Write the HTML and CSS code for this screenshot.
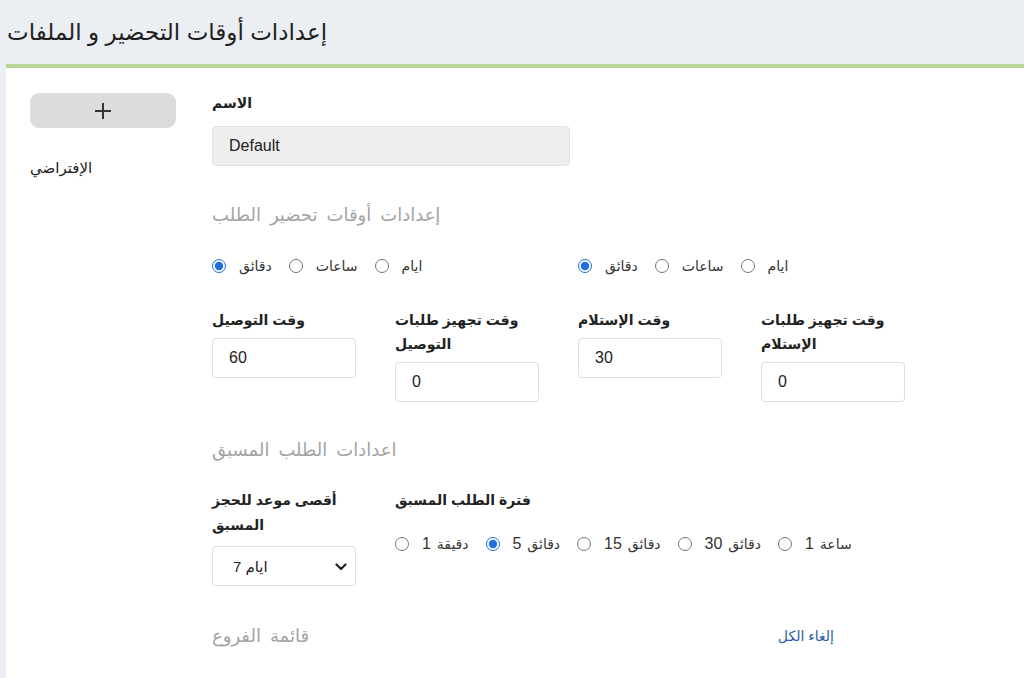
FILE: index.html
```html
<!DOCTYPE html>
<html lang="ar">
<head>
<meta charset="utf-8">
<link rel="stylesheet" href="styles.css">
</head>
<body>
<header class="page-head">
  <h1 class="page-title">إعدادات أوقات التحضير و الملفات</h1>
</header>
<div class="card">
  <aside class="side">
    <button class="add-btn" type="button" aria-label="add">
      <svg width="20" height="20" viewBox="0 0 20 20"><path d="M10 2v16M2 10h16" stroke="#333" stroke-width="2" fill="none"/></svg>
    </button>
    <div class="side-item">الإفتراضي</div>
  </aside>
  <main class="main">
    <label class="lbl">الاسم</label>
    <input class="field name-field" type="text" value="Default">

    <h2 class="sec-title">إعدادات أوقات تحضير الطلب</h2>

    <div class="grid4">
      <div class="radios span2">
        <label class="radio"><input type="radio" name="u1" checked><span>دقائق</span></label>
        <label class="radio"><input type="radio" name="u1"><span>ساعات</span></label>
        <label class="radio"><input type="radio" name="u1"><span>ايام</span></label>
      </div>
      <div class="radios span2">
        <label class="radio"><input type="radio" name="u2" checked><span>دقائق</span></label>
        <label class="radio"><input type="radio" name="u2"><span>ساعات</span></label>
        <label class="radio"><input type="radio" name="u2"><span>ايام</span></label>
      </div>

      <div class="col">
        <label class="lbl2">وقت التوصيل</label>
        <input class="field" type="text" value="60">
      </div>
      <div class="col">
        <label class="lbl2">وقت تجهيز طلبات<br>التوصيل</label>
        <input class="field" type="text" value="0">
      </div>
      <div class="col">
        <label class="lbl2">وقت الإستلام</label>
        <input class="field" type="text" value="30">
      </div>
      <div class="col">
        <label class="lbl2">وقت تجهيز طلبات<br>الإستلام</label>
        <input class="field" type="text" value="0">
      </div>
    </div>

    <h2 class="sec-title sec2">اعدادات الطلب المسبق</h2>

    <div class="pre">
      <div class="col">
        <label class="lbl2">أقصى موعد للحجز<br>المسبق</label>
        <div class="select-wrap">
          <select class="field sel">
            <option>7 ايام</option>
          </select>
          <svg class="chev" width="12" height="8" viewBox="0 0 12 8"><path d="M1.5 1.5L6 6l4.5-4.5" stroke="#222" stroke-width="2.2" fill="none" stroke-linecap="round" stroke-linejoin="round"/></svg>
        </div>
      </div>
      <div class="col">
        <label class="lbl2">فترة الطلب المسبق</label>
        <div class="radios pre-radios">
          <label class="radio"><input type="radio" name="p"><span>دقيقة <b class="num">1</b></span></label>
          <label class="radio"><input type="radio" name="p" checked><span>دقائق <b class="num">5</b></span></label>
          <label class="radio"><input type="radio" name="p"><span>دقائق <b class="num">15</b></span></label>
          <label class="radio"><input type="radio" name="p"><span>دقائق <b class="num">30</b></span></label>
          <label class="radio"><input type="radio" name="p"><span>ساعة <b class="num">1</b></span></label>
        </div>
      </div>
    </div>

    <div class="branches">
      <h2 class="sec-title sec3">قائمة الفروع</h2>
      <a class="link" href="#">إلغاء الكل</a>
    </div>
  </main>
</div>
</body>
</html>
```

FILE: styles.css
```css
html, body {
  margin: 0;
  padding: 0;
}
body {
  background: #ebeef3;
  font-family: "Liberation Sans", "DejaVu Sans", sans-serif;
  color: #222;
  height: 678px;
  overflow: hidden;
}
.page-head {
  height: 64px;
  padding-left: 7px;
  display: flex;
  align-items: center;
}
.page-title {
  margin: 0;
  font-size: 23px;
  font-weight: normal;
  color: #1f1f1f;
}
.card {
  margin-left: 6px;
  background: #fff;
  border-top: 4px solid #b8d597;
  height: 610px;
  display: flex;
}
.side {
  width: 206px;
  padding-left: 24px;
  padding-top: 25px;
  box-sizing: border-box;
}
.add-btn {
  width: 146px;
  height: 35px;
  border: none;
  border-radius: 9px;
  background: #dcdcdc;
  display: flex;
  align-items: center;
  justify-content: center;
  padding: 0;
}
.side-item {
  margin-top: 31px;
  font-size: 15px;
  color: #222;
}
.main {
  padding-top: 25px;
  flex: 1;
}
.lbl {
  display: block;
  font-size: 14px;
  font-weight: bold;
  line-height: 20px;
  margin-bottom: 13px;
}
.field {
  box-sizing: border-box;
  height: 40px;
  border: 1px solid #dedede;
  border-radius: 4px;
  padding: 0 16px;
  font-family: "Liberation Sans", "DejaVu Sans", sans-serif;
  font-size: 16px;
  color: #222;
  background: #fff;
  width: 144px;
  display: block;
}
.name-field {
  width: 358px;
  background: #eeeeee;
  border-color: #e2e2e2;
}
.sec-title {
  margin: 37px 0 0;
  font-size: 18px;
  line-height: 24px;
  font-weight: normal;
  color: #a3a3a3;
  word-spacing: 4px;
}
.grid4 {
  display: grid;
  grid-template-columns: repeat(4, 144px);
  column-gap: 39px;
  align-items: start;
  margin-top: 29px;
}
.span2 {
  grid-column: span 2;
}
.radios {
  display: flex;
  align-items: center;
  height: 20px;
  font-size: 14px;
  color: #333;
}
.radio {
  display: flex;
  align-items: center;
  margin-right: 17px;
  white-space: nowrap;
}
.radio input {
  width: 14px;
  height: 14px;
  margin: 0 13px 0 0;
  accent-color: #1e6fe0;
}
.col {
  margin-top: 32px;
}
.lbl2 {
  display: block;
  font-size: 14px;
  font-weight: bold;
  line-height: 24px;
  margin-bottom: 6px;
}
.sec2 {
  margin-top: 36px;
}
.pre {
  display: grid;
  grid-template-columns: 144px auto;
  column-gap: 39px;
  align-items: start;
}
.pre .col {
  margin-top: 26px;
}
.pre .lbl2 {
  line-height: 25px;
  margin-bottom: 8px;
}
.pre-radios {
  margin-top: 21px;
}
.pre-radios .radio {
  margin-right: 17px;
}
.pre-radios .radio input {
  margin-right: 11px;
}
.num {
  font-weight: normal;
  font-size: 16px;
  margin: 0 2px;
}
.select-wrap {
  position: relative;
  width: 144px;
}
.sel {
  appearance: none;
  -webkit-appearance: none;
  padding-left: 20px;
  font-size: 15px;
}
.chev {
  position: absolute;
  right: 9px;
  top: 17px;
  pointer-events: none;
}
.branches {
  display: flex;
  justify-content: space-between;
  align-items: center;
  width: 622px;
  margin-top: 38px;
}
.sec3 {
  margin: 0;
}
.link {
  color: #2a5ea6;
  font-size: 14px;
  text-decoration: none;
}
```
